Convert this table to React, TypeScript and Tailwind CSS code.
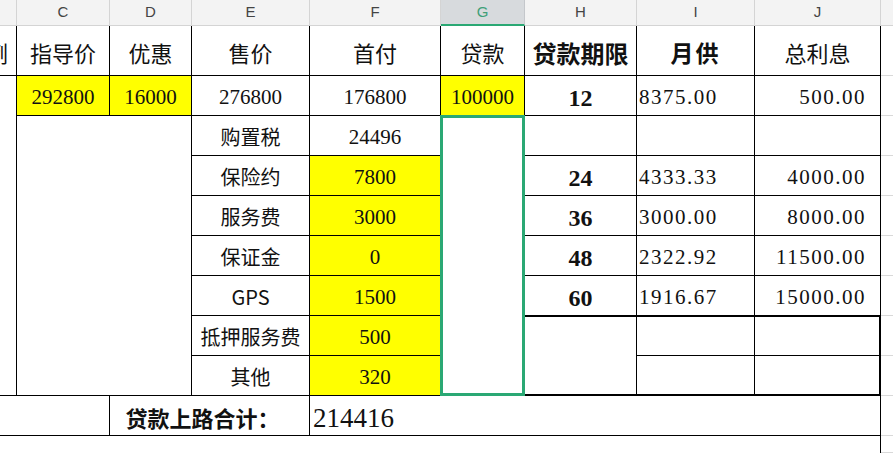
import React from "react";

const cn = "font-['Noto_Sans_CJK_SC',sans-serif]";
const num = "font-['Liberation_Serif','Noto_Sans_CJK_SC',serif]";

const colHead = "flex items-center justify-center bg-[#f3f3f3] border-r border-b border-[#d4d4d4] text-[15px] text-[#444] font-['Liberation_Sans',sans-serif]";
const cell = "flex items-center justify-center border-r border-b border-black text-[#111] overflow-hidden whitespace-nowrap";
const kCell = "border-b border-[#d9d9d9]";

const App = () => {
  const extras = [
    { label: "购置税", first: "24496", yellow: false },
    { label: "保险约", first: "7800", yellow: true },
    { label: "服务费", first: "3000", yellow: true },
    { label: "保证金", first: "0", yellow: true },
    { label: "GPS", first: "1500", yellow: true },
    { label: "抵押服务费", first: "500", yellow: true },
    { label: "其他", first: "320", yellow: true },
  ];

  const terms = [
    { months: "24", monthly: "4333.33", interest: "4000.00" },
    { months: "36", monthly: "3000.00", interest: "8000.00" },
    { months: "48", monthly: "2322.92", interest: "11500.00" },
    { months: "60", monthly: "1916.67", interest: "15000.00" },
  ];

  return (
    <div className="w-[893px] h-[453px] overflow-hidden bg-white">
      <div className="grid grid-cols-[17px_93px_82px_118px_131px_84px_112px_118px_126px_12px] grid-rows-[26px_50px_repeat(9,40px)_17px]">
        {/* column letters */}
        <div className={`${colHead} col-start-1 row-start-1`} />
        <div className={`${colHead} col-start-2 row-start-1`}>C</div>
        <div className={`${colHead} col-start-3 row-start-1`}>D</div>
        <div className={`${colHead} col-start-4 row-start-1`}>E</div>
        <div className={`${colHead} col-start-5 row-start-1`}>F</div>
        <div className="col-start-6 row-start-1 flex items-center justify-center bg-[#d7dadd] border-r border-[#c4c7cb] border-b-2 border-b-[#2aa874] text-[15px] text-[#3f9f78] font-['Liberation_Sans',sans-serif]">
          G
        </div>
        <div className={`${colHead} col-start-7 row-start-1`}>H</div>
        <div className={`${colHead} col-start-8 row-start-1`}>I</div>
        <div className={`${colHead} col-start-9 row-start-1`}>J</div>
        <div className={`${colHead} col-start-10 row-start-1 border-r-0`} />

        {/* header labels */}
        <div className={`${cell} ${cn} col-start-1 row-start-2 justify-end pr-[8px] pt-1 text-[22px]`}>比例</div>
        <div className={`${cell} ${cn} col-start-2 row-start-2 pt-1 text-[22px]`}>指导价</div>
        <div className={`${cell} ${cn} col-start-3 row-start-2 pt-1 text-[22px]`}>优惠</div>
        <div className={`${cell} ${cn} col-start-4 row-start-2 pt-1 text-[22px]`}>售价</div>
        <div className={`${cell} ${cn} col-start-5 row-start-2 pt-1 text-[22px]`}>首付</div>
        <div className={`${cell} ${cn} col-start-6 row-start-2 pt-1 text-[22px]`}>贷款</div>
        <div className={`${cell} ${cn} col-start-7 row-start-2 pt-1 text-[24px] font-bold`}>贷款期限</div>
        <div className={`${cell} ${cn} col-start-8 row-start-2 pt-1 text-[23px] font-bold tracking-[2px]`}>月供</div>
        <div className={`${cell} ${cn} col-start-9 row-start-2 pt-1 text-[22px]`}>总利息</div>
        <div className={`${kCell} col-start-10 row-start-2`} />

        {/* first data row */}
        <div className={`${cell} col-start-1 row-start-3 row-span-8`} />
        <div className={`${cell} ${num} col-start-2 row-start-3 pt-[5px] bg-[#ffff00] text-[21px]`}>292800</div>
        <div className={`${cell} ${num} col-start-3 row-start-3 pt-[5px] bg-[#ffff00] text-[21px]`}>16000</div>
        <div className={`${cell} ${num} col-start-4 row-start-3 pt-[5px] text-[21px]`}>276800</div>
        <div className={`${cell} ${num} col-start-5 row-start-3 pt-[5px] text-[21px]`}>176800</div>
        <div className={`${cell} ${num} col-start-6 row-start-3 pt-[5px] bg-[#ffff00] text-[21px]`}>100000</div>
        <div className={`${cell} ${num} col-start-7 row-start-3 pt-[5px] text-[24px] font-bold`}>12</div>
        <div className={`${cell} ${num} col-start-8 row-start-3 pt-[5px] justify-start pl-[2px] text-[21px] tracking-[1.5px]`}>8375.00</div>
        <div className={`${cell} ${num} col-start-9 row-start-3 pt-[5px] justify-end pr-[14px] text-[21px] tracking-[1.5px]`}>500.00</div>
        <div className={`${kCell} col-start-10 row-start-3`} />

        {/* merged C:D block */}
        <div className={`${cell} col-start-2 col-span-2 row-start-4 row-span-7`} />

        {/* E / F costs */}
        {extras.map((row, i) => (
          <React.Fragment key={row.label}>
            <div className={`${cell} ${cn} col-start-4 pt-[3px] text-[20px]`} style={{ gridRowStart: i + 4 }}>
              {row.label}
            </div>
            <div
              className={`${cell} ${num} col-start-5 pt-[5px] text-[21px] ${row.yellow ? "bg-[#ffff00]" : ""}`}
              style={{ gridRowStart: i + 4 }}
            >
              {row.first}
            </div>
          </React.Fragment>
        ))}

        {/* selected G block */}
        <div className={`${cell} relative overflow-visible col-start-6 row-start-4 row-span-7`}>
          <div className="absolute -left-px -top-px -right-px -bottom-px border-[3px] border-[#2aa874]" />
        </div>

        {/* H / I / J terms */}
        <div className={`${cell} col-start-7 row-start-4`} />
        <div className={`${cell} col-start-8 row-start-4`} />
        <div className={`${cell} col-start-9 row-start-4`} />
        {terms.map((t, i) => (
          <React.Fragment key={t.months}>
            <div className={`${cell} ${num} col-start-7 pt-[5px] text-[24px] font-bold`} style={{ gridRowStart: i + 5 }}>
              {t.months}
            </div>
            <div
              className={`${cell} ${num} col-start-8 pt-[5px] justify-start pl-[2px] text-[21px] tracking-[1.5px]`}
              style={{ gridRowStart: i + 5 }}
            >
              {t.monthly}
            </div>
            <div
              className={`${cell} ${num} col-start-9 pt-[5px] justify-end pr-[14px] text-[21px] tracking-[1.5px]`}
              style={{ gridRowStart: i + 5 }}
            >
              {t.interest}
            </div>
          </React.Fragment>
        ))}
        <div className={`${cell} col-start-7 row-start-9 row-span-2 border-t border-b-2`} />
        <div className={`${cell} col-start-8 row-start-9 border-t`} />
        <div className={`${cell} col-start-9 row-start-9 border-t border-r-2`} />
        <div className={`${cell} col-start-8 row-start-10 border-b-2`} />
        <div className={`${cell} col-start-9 row-start-10 border-b-2 border-r-2`} />

        {[4, 5, 6, 7, 8, 9, 10].map((r) => (
          <div key={r} className={`${kCell} col-start-10`} style={{ gridRowStart: r }} />
        ))}

        {/* totals row */}
        <div className={`${cell} col-start-1 col-span-2 row-start-11`} />
        <div className={`${cell} ${cn} col-start-3 col-span-2 row-start-11 pr-[14px] pt-[3px] text-[22px] font-bold`}>
          贷款上路合计：
        </div>
        <div className={`${cell} ${num} col-start-5 col-span-5 row-start-11 justify-start pl-[3px] pt-[5px] text-[27px]`}>
          214416
        </div>
        <div className={`${kCell} col-start-10 row-start-11`} />

        <div className="col-start-1 col-span-9 row-start-12 border-r border-black" />
        <div className={`${kCell} col-start-10 row-start-12`} />
      </div>
    </div>
  );
};

export default App;
